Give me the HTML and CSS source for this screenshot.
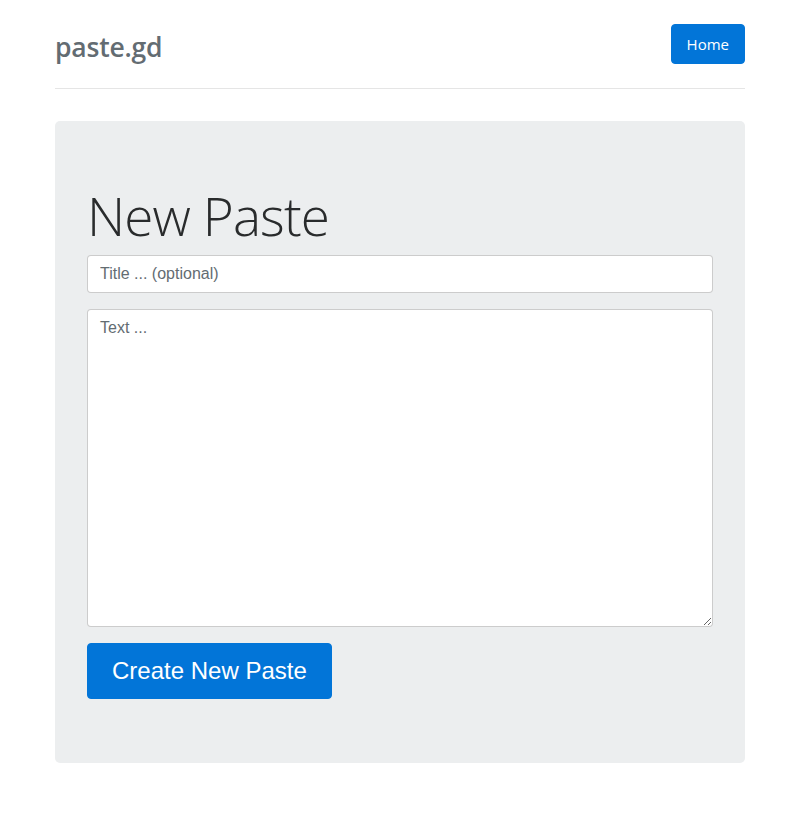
FILE: index.html
```html
<!DOCTYPE html>
<html lang="en">
<head>
<meta charset="utf-8">
<title>paste.gd</title>
<link rel="stylesheet" href="styles.css">
</head>
<body>
<div class="container">
  <header class="header">
    <h3 class="brand">paste.gd</h3>
    <a class="btn btn-primary" href="#">Home</a>
  </header>
  <main class="jumbotron">
    <h1 class="title">New Paste</h1>
    <form class="paste-form">
      <div class="form-group">
        <input class="form-control" type="text" placeholder="Title ... (optional)">
      </div>
      <div class="form-group">
        <textarea class="form-control textarea" placeholder="Text ..."></textarea>
      </div>
      <button class="btn btn-primary btn-lg" type="button">Create New Paste</button>
    </form>
  </main>
</div>
</body>
</html>
```
FILE: styles.css
```css
* { box-sizing: border-box; }
html, body { margin: 0; padding: 0; background: #fff; }
body {
  font-family: "Open Sans", "Noto Sans", sans-serif;
  color: #292b2c;
}
.container {
  width: 690px;
  margin: 0 auto;
}
.header {
  display: flex;
  justify-content: space-between;
  align-items: center;
  padding: 24px 0 24px;
  border-bottom: 1px solid #e5e5e5;
}
.brand {
  margin: 0;
  font-size: 26.5px;
  font-weight: 600;
  color: #636c72;
  line-height: 1;
  padding-top: 7px;
  letter-spacing: -0.2px;
}
.btn {
  display: inline-block;
  border: 1px solid transparent;
  border-radius: 4px;
  text-decoration: none;
  cursor: pointer;
  font-family: "Open Sans", "Noto Sans", sans-serif;
}
.btn-primary {
  background: #0275d8;
  border-color: #0275d8;
  color: #fff;
  font-size: 15px;
  line-height: 22px;
  padding: 8px 15px;
  height: 40px;
}
.jumbotron {
  margin-top: 32px;
  background: #eceeef;
  border-radius: 5px;
  padding: 64px 32px 64px;
}
.title {
  margin: 0 0 8px;
  font-size: 53px;
  font-weight: 300;
  line-height: 62px;
  color: #292b2c;
  letter-spacing: -0.9px;
}
.form-group { margin-bottom: 16px; }
.form-control {
  display: block;
  width: 100%;
  font-family: "Liberation Sans", Arial, sans-serif;
  font-size: 16px;
  line-height: 20px;
  color: #464a4c;
  background: #fff;
  border: 1px solid rgba(0,0,0,.2);
  border-radius: 4px;
  padding: 8px 12px;
  height: 38px;
  margin: 0;
}
.form-control::placeholder { color: #636c72; opacity: 1; }
.textarea {
  height: 318px;
  resize: vertical;
  padding-top: 8px;
}
.btn-lg {
  font-family: "Liberation Sans", Arial, sans-serif;
  font-size: 24px;
  line-height: 32px;
  height: 56px;
  padding: 11px 24px;
  border-radius: 4px;
}
```
